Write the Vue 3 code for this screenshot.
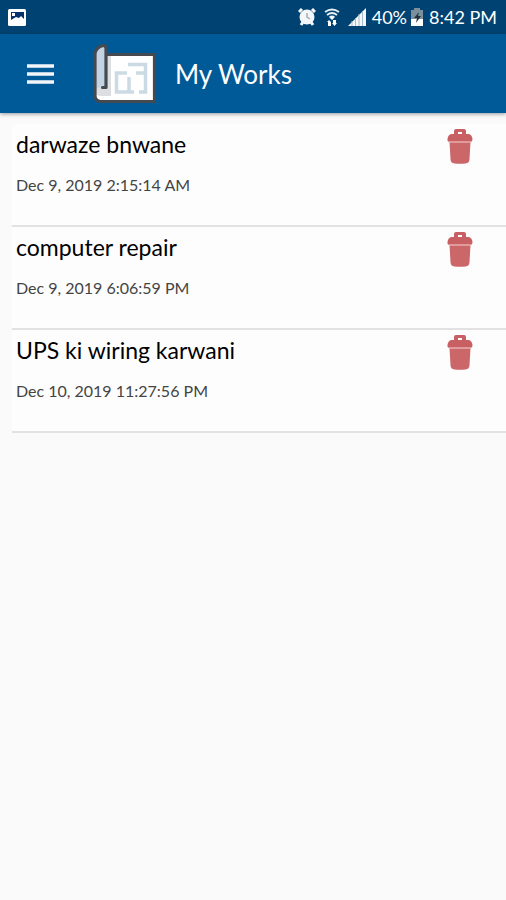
<script setup>
import { ref } from 'vue'

const works = ref([
  { id: 1, title: 'darwaze bnwane', date: 'Dec 9, 2019 2:15:14 AM' },
  { id: 2, title: 'computer repair', date: 'Dec 9, 2019 6:06:59 PM' },
  { id: 3, title: 'UPS ki wiring karwani', date: 'Dec 10, 2019 11:27:56 PM' }
])

function remove(id) {
  works.value = works.value.filter((work) => work.id !== id)
}
</script>

<template>
  <div class="screen">
    <div class="status">
      <svg class="photo" width="18" height="17" viewBox="0 0 18 17" aria-hidden="true">
        <rect width="18" height="17" rx="1.5" fill="#fff" />
        <path d="M3 3h13v7l-3-3-2 2-3-1-5 3z" fill="#06316b" />
        <rect x="4" y="4" width="3" height="3" fill="#fff" />
      </svg>
      <div class="indicators">
        <svg width="18" height="18" viewBox="0 0 18 18" aria-hidden="true">
          <circle cx="9" cy="9" r="7.500" fill="#f4f7fa" />
          <path d="M1 4l3-3M14 1l3 3M3 17l2-3M15 17l-2-3" stroke="#f4f7fa" stroke-width="3" />
          <path d="M9 5v4l3 2" fill="none" stroke="#a3afb8" stroke-width="1.500" />
        </svg>
        <svg class="wifi" width="16" height="18" viewBox="0 0 16 18" aria-hidden="true">
          <g fill="none" stroke="#e6edf3" stroke-width="1.800">
            <path d="M1 4q7-5 14 0" />
            <path d="M3 7q5-4 10 0" />
            <path d="M5.500 9.500q2.500-2 5 0" />
          </g>
          <path d="M8 8l2 2-2 2-2-2zM3 14l2-2 2 2v4H4v-4zM9 12h3v3h1l-2.500 3L8 15h1z" fill="#fff" />
        </svg>
        <svg class="signal" width="18" height="18" viewBox="0 0 18 18" aria-hidden="true">
          <path d="M0 18L18 0v18z" fill="#f4f7fa" />
          <path d="M4 13v5M7.500 10v8M11 6v12M14.500 3v15" stroke="#a9bac8" stroke-width="1" />
        </svg>
        <span class="percent">40%</span>
        <svg class="battery" width="12" height="18" viewBox="0 0 12 18" aria-hidden="true">
          <path d="M3 0h6v2h3v10H0V2h3z" fill="#7b909c" />
          <path d="M0 11h12v7H0z" fill="#fff" />
          <path d="M8 4L3 10h3l-1 5 5-7H7z" fill="#24343e" />
        </svg>
        <span>8:42 PM</span>
      </div>
    </div>

    <header class="bar">
      <button class="menu" type="button" aria-label="Open menu">
        <svg width="27" height="20" viewBox="0 0 27 20" aria-hidden="true">
          <path d="M0 2h27M0 10h27M0 18h27" stroke="#f2f6fb" stroke-width="3.500" />
        </svg>
      </button>
      <svg class="logo" width="64" height="60" viewBox="0 0 64 60" aria-hidden="true">
        <path d="M13 10.500h48.500V58H7q-5-1-5-6V10h11z" fill="#fff" />
        <path d="M2 43h11V12h5v40H8q-5 0-6-3z" fill="#dcdee1" />
        <path d="M2 48V10q1-7 10-8v41H8q-5 0-6 5z" fill="#c3d3e3" />
        <path d="M13 10.500h48.500V57.500H7q-5-1-5-6V10q1-7 8-8.500 3 0 3 3V43.500H9.500" fill="none" stroke="#454950" stroke-width="3.200" stroke-linejoin="round" stroke-linecap="round" />
        <path d="M35 20.500h17.500V48H46M43 29h9.500M34 29H23.500v19H41M36 33v15" fill="none" stroke="#cbdae3" stroke-width="3.500" />
      </svg>
      <h1>My Works</h1>
    </header>

    <main>
      <ul class="works">
        <li v-for="work in works" :key="work.id" class="work">
          <div class="info">
            <h2>{{ work.title }}</h2>
            <time>{{ work.date }}</time>
          </div>
          <button class="delete" type="button" :aria-label="`Delete ${work.title}`" @click="remove(work.id)">
            <svg width="26" height="36" viewBox="0 0 26 36" aria-hidden="true">
              <path d="M7 6V3q0-2 2-2h8q2 0 2 2v3h3q3 1 3.500 5 0 3-2.500 3H3Q0 14 .5 11 1 7 4 6zM11 6h4V4h-4z" fill="#c75f63" fill-rule="evenodd" />
              <path d="M2.500 14h21l-1 17q0 4-4 4.500-5.500 .5-11 0-4-.5-4-4.500z" fill="#cb6669" />
              <path d="M2 14h22" stroke="#e9aeae" stroke-width="1.500" />
            </svg>
          </button>
        </li>
      </ul>
    </main>
  </div>
</template>

<style>
body {
  margin: 0;
  background: #fafafa;
}
</style>

<style scoped>
.screen {
  min-height: 100vh;
  background: #fafafa;
  color: #000;
  font-family: Lato, "Open Sans", sans-serif;
}

.status {
  display: flex;
  align-items: center;
  justify-content: space-between;
  height: 34px;
  padding: 0 9px 0 8px;
  box-sizing: border-box;
  background: #004373;
  color: #fff;
}

.indicators {
  display: flex;
  align-items: center;
  font-size: 18px;
  line-height: 24px;
}

.wifi,
.signal {
  margin-left: 8px;
}

.percent {
  margin-left: 6px;
}

.battery {
  margin: 0 6px 0 4px;
}

.bar {
  display: flex;
  align-items: center;
  height: 79px;
  padding: 0 20px;
  box-sizing: border-box;
  background: #005a98;
  box-shadow: 0 1px 4px rgba(0, 0, 0, 0.4);
  color: #fff;
}

button {
  display: flex;
  align-items: center;
  justify-content: center;
  padding: 0;
  border: 0;
  background: none;
  cursor: pointer;
}

.menu {
  width: 40px;
  height: 48px;
}

.logo {
  flex: none;
  margin: 0 18px 0 33px;
}

h1,
h2 {
  margin: 0;
}

h1 {
  font-size: 26px;
  font-weight: 400;
  line-height: 32px;
}

.works {
  margin: 0;
  padding: 11px 0 0 12px;
  list-style: none;
}

.work {
  display: flex;
  align-items: flex-start;
  justify-content: space-between;
  height: 103px;
  padding: 4px 33px 0 4px;
  box-sizing: border-box;
  border-bottom: 2px solid #e2e2e2;
  background: #fdfdfd;
}

.info {
  display: flex;
  flex-direction: column;
  gap: 13px;
}

h2 {
  font-size: 23px;
  font-weight: 400;
  line-height: 32px;
}

time {
  color: #444;
  font-size: 16px;
  line-height: 24px;
}
</style>
